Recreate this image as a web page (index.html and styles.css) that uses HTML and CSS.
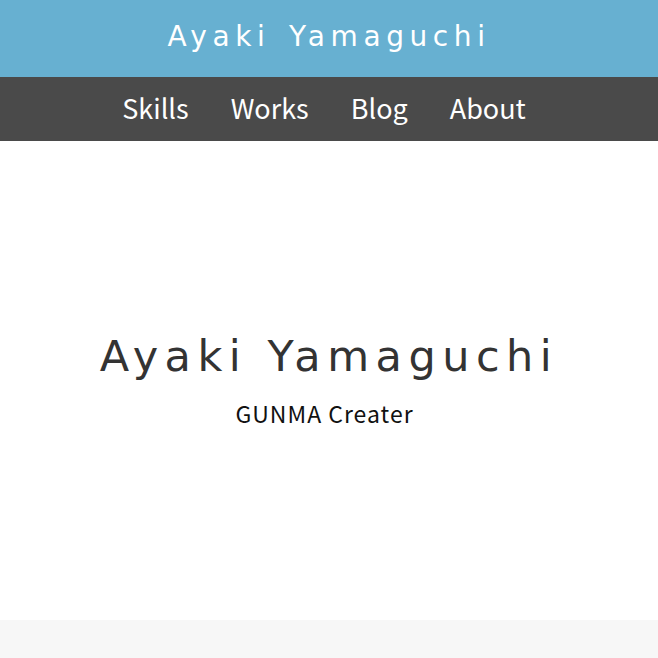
FILE: index.html
```html
<!DOCTYPE html>
<html lang="ja">
<head>
<meta charset="utf-8">
<title>Ayaki Yamaguchi</title>
<link rel="stylesheet" href="styles.css">
</head>
<body>
<header class="site-header">
  <h1 class="site-title">Ayaki Yamaguchi</h1>
</header>
<nav class="site-nav">
  <a class="nav-link" href="#">Skills</a>
  <a class="nav-link" href="#">Works</a>
  <a class="nav-link" href="#">Blog</a>
  <a class="nav-link" href="#">About</a>
</nav>
<main class="hero">
  <h2 class="hero-title">Ayaki Yamaguchi</h2>
  <p class="hero-sub">GUNMA Creater</p>
</main>
<footer class="site-footer"></footer>
</body>
</html>
```

FILE: styles.css
```css
* { box-sizing: border-box; }
html, body { margin: 0; padding: 0; }
body {
  font-family: "Noto Sans CJK JP", "Noto Sans", sans-serif;
  background: #fff;
}
.site-header {
  height: 77px;
  background: #67b0d1;
  display: flex;
  align-items: center;
  justify-content: center;
}
.site-title {
  margin: 0 0 4px;
  font-family: "DejaVu Sans", sans-serif;
  font-weight: normal;
  font-size: 28px;
  letter-spacing: 5.6px;
  word-spacing: 4px;
  color: #fff;
}
.site-nav {
  height: 64px;
  padding: 0 10px 4px 0;
  background: #4a4a4a;
  display: flex;
  align-items: center;
  justify-content: center;
  gap: 42px;
}
.nav-link {
  color: #fff;
  text-decoration: none;
  font-size: 27px;
}
.hero {
  height: 479px;
  display: flex;
  flex-direction: column;
  align-items: center;
  justify-content: center;
}
.hero-title {
  margin: 0;
  font-family: "DejaVu Sans", sans-serif;
  font-weight: normal;
  font-size: 43px;
  letter-spacing: 6.5px;
  color: #333;
}
.hero-sub {
  margin: 15px 0 0;
  padding-right: 9px;
  font-size: 23px;
  letter-spacing: 1px;
  color: #111;
}
.site-footer {
  height: 38px;
  background: #f7f7f7;
}
```
